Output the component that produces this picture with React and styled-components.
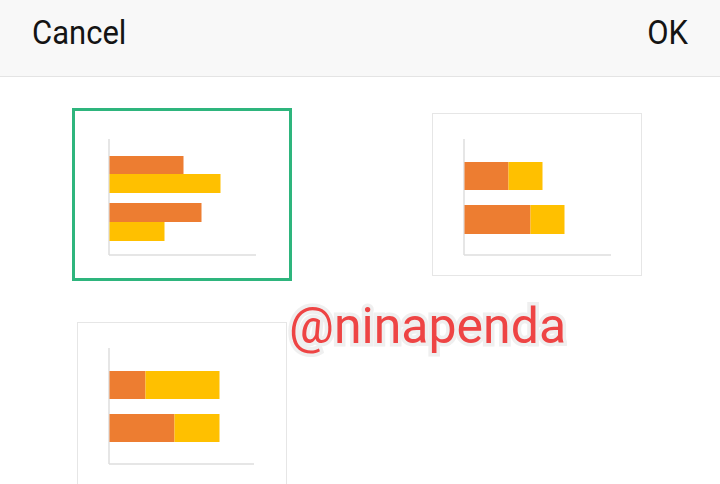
import React from "react";
import styled, { createGlobalStyle } from "styled-components";

const GlobalStyle = createGlobalStyle`
  html, body {
    margin: 0;
    padding: 0;
    background: #ffffff;
    overflow: hidden;
  }
  body {
    font-family: Roboto, "Liberation Sans", Arial, sans-serif;
  }
`;

const Screen = styled.div`
  position: relative;
  width: 720px;
  height: 484px;
  background: #ffffff;
  overflow: hidden;
`;

const Header = styled.div`
  display: flex;
  justify-content: space-between;
  align-items: flex-start;
  box-sizing: border-box;
  height: 77px;
  padding: 15px 32px 0 32px;
  background: #f8f8f8;
  border-bottom: 1px solid #e4e4e4;
`;

const HeaderButton = styled.button`
  border: none;
  background: transparent;
  padding: 0;
  font-family: Roboto, "Liberation Sans", Arial, sans-serif;
  font-size: 31px;
  line-height: normal;
  color: #141414;
  transform: scaleY(1.09);
  transform-origin: 50% 79%;
  cursor: pointer;
`;

const Grid = styled.div`
  display: grid;
  grid-template-columns: 355px 355px;
  grid-auto-rows: 209px;
  justify-items: center;
  align-items: center;
  padding: 13px 0 0 4px;
`;

const Card = styled.div`
  box-sizing: border-box;
  width: 210px;
  height: 163px;
  padding: 25px 0 0 30px;
  background: #ffffff;
  border: 1px solid ${(p) => (p.$selected ? "#ffffff" : "#e6e6e6")};
  outline: ${(p) => (p.$selected ? "3px solid #2eb57d" : "none")};
  outline-offset: 2px;
  cursor: pointer;
`;

const Watermark = styled.div`
  position: absolute;
  left: 289px;
  top: 297px;
  font-family: Roboto, "Liberation Sans", Arial, sans-serif;
  font-size: 50px;
  line-height: normal;
  color: #ee4444;
  -webkit-text-stroke: 7px rgba(238, 238, 238, 0.95);
  paint-order: stroke fill;
  pointer-events: none;
`;

const ORANGE = "#ed7d31";
const YELLOW = "#ffc000";
const AXIS = "#dedede";

// bars: y offset from axis top, height, and [length, colour] segments laid end to end
const charts = [
  {
    id: "clustered",
    axisW: 148,
    bars: [
      { y: 17, h: 18, parts: [[74, ORANGE]] },
      { y: 35, h: 19, parts: [[111, YELLOW]] },
      { y: 64, h: 19, parts: [[92, ORANGE]] },
      { y: 83, h: 19, parts: [[55, YELLOW]] },
    ],
  },
  {
    id: "stacked",
    axisW: 148,
    bars: [
      { y: 23, h: 28, parts: [[44, ORANGE], [34, YELLOW]] },
      { y: 66, h: 29, parts: [[66, ORANGE], [34, YELLOW]] },
    ],
  },
  {
    id: "percent",
    axisW: 146,
    bars: [
      { y: 23, h: 28, parts: [[36, ORANGE], [74, YELLOW]] },
      { y: 66, h: 28, parts: [[65, ORANGE], [45, YELLOW]] },
    ],
  },
];

const BarChart = ({ chart }) => (
  <svg width="152" height="118" viewBox="0 0 152 118">
    <line x1="1" y1="0" x2="1" y2="116" stroke={AXIS} strokeWidth="1.5" />
    <line x1="1" y1="116" x2={chart.axisW} y2="116" stroke={AXIS} strokeWidth="1.5" />
    {chart.bars.map((bar, i) => {
      let x = 1.5;
      return (
        <g key={i}>
          {bar.parts.map(([len, color], j) => {
            const rect = <rect key={j} x={x} y={bar.y} width={len} height={bar.h} fill={color} />;
            x += len;
            return rect;
          })}
        </g>
      );
    })}
  </svg>
);

export default function App() {
  return (
    <Screen>
      <GlobalStyle />
      <Header>
        <HeaderButton>Cancel</HeaderButton>
        <HeaderButton>OK</HeaderButton>
      </Header>
      <Grid>
        {charts.map((c, i) => (
          <Card key={c.id} $selected={i === 0}>
            <BarChart chart={c} />
          </Card>
        ))}
      </Grid>
      <Watermark>@ninapenda</Watermark>
    </Screen>
  );
}
